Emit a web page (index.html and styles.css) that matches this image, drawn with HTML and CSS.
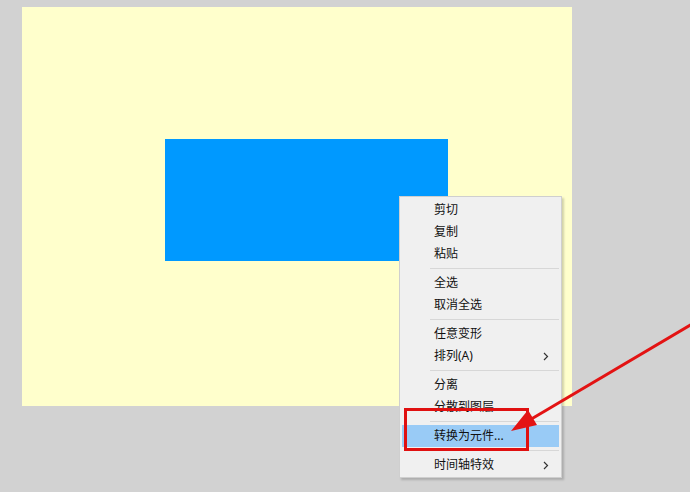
FILE: index.html
```html
<!DOCTYPE html>
<html lang="zh-CN">
<head>
  <meta charset="UTF-8" />
  <title>舞台右键菜单</title>
  <link rel="stylesheet" href="styles.css">
</head>
<body>
  <div class="stage">
    <div class="shape"></div>
  </div>

  <!-- context menu -->
  <ul class="menu">
    <li class="item">剪切</li>
    <li class="item">复制</li>
    <li class="item">粘贴</li>
    <li class="sep"></li>
    <li class="item">全选</li>
    <li class="item">取消全选</li>
    <li class="sep"></li>
    <li class="item">任意变形</li>
    <li class="item sub">排列(A)
      <svg class="chev" width="6" height="9" viewBox="0 0 6 9"><path d="M1 1 L4.5 4.5 L1 8" fill="none" stroke="#333" stroke-width="1.2"/></svg>
    </li>
    <li class="sep"></li>
    <li class="item">分离</li>
    <li class="item">分散到图层</li>
    <li class="sep"></li>
    <li class="item active">转换为元件...</li>
    <li class="sep"></li>
    <li class="item sub">时间轴特效
      <svg class="chev" width="6" height="9" viewBox="0 0 6 9"><path d="M1 1 L4.5 4.5 L1 8" fill="none" stroke="#333" stroke-width="1.2"/></svg>
    </li>
  </ul>

  <!-- annotation -->
  <div class="mark"></div>
  <svg class="arrow" width="690" height="492" viewBox="0 0 690 492">
    <line x1="692" y1="324" x2="528" y2="421" stroke="#e31313" stroke-width="3"/>
    <polygon points="511,431 537,425 528,410" fill="#e31313"/>
  </svg>
</body>
</html>
```

FILE: styles.css
```css
* {
  margin: 0;
  padding: 0;
  box-sizing: border-box;
}
body {
  background: #d2d2d2;
  width: 690px;
  height: 492px;
  overflow: hidden;
  position: relative;
  font-family: 'Noto Sans', 'Noto Sans CJK SC', sans-serif;
  font-size: 12px;
  color: #111;
}
.stage {
  position: relative;
  width: 550px;
  height: 399px;
  margin: 7px 0 0 22px;
  background: #ffffcc;
}
.shape {
  position: absolute;
  left: 143px;
  top: 132px;
  width: 283px;
  height: 122px;
  background: #0099ff;
}
.menu {
  position: absolute;
  left: 399px;
  top: 196px;
  width: 163px;
  padding: 2px 2px 1px 2px;
  list-style: none;
  background: #f0f0f0;
  border: 1px solid #cfcfcf;
  box-shadow: 2px 2px 2px rgba(0, 0, 0, 0.18);
}
.item {
  position: relative;
  height: 22px;
  line-height: 22px;
  padding-left: 32px;
  white-space: nowrap;
}
.item.active {
  background: #99cbf6;
}
.chev {
  position: absolute;
  right: 10px;
  top: 7px;
}
.sep {
  height: 7px;
  margin-left: 28px;
  display: flex;
  align-items: center;
}
.sep::after {
  content: "";
  flex: 1;
  border-top: 1px solid #d7d7d7;
}
.mark {
  position: absolute;
  left: 404px;
  top: 408px;
  width: 125px;
  height: 43px;
  border: 3px solid #e01010;
}
.arrow {
  position: absolute;
  left: 0;
  top: 0;
}
```
